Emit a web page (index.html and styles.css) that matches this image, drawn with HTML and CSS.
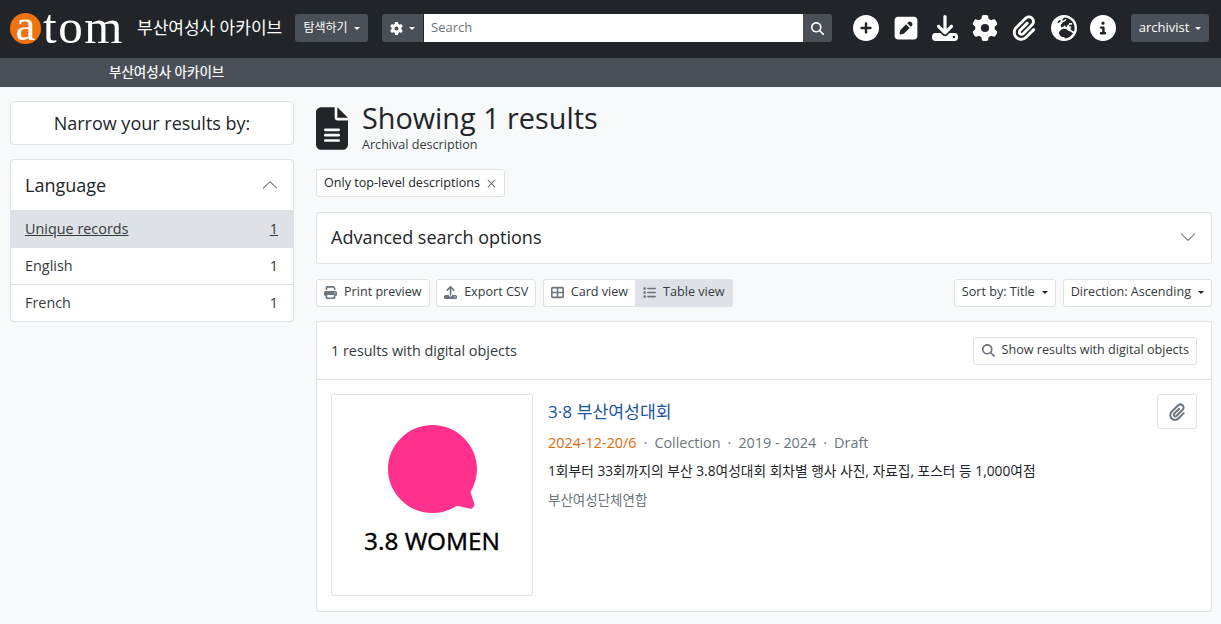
FILE: index.html
```html
<!DOCTYPE html>
<html lang="ko">
<head>
<meta charset="utf-8">
<title>부산여성사 아카이브</title>
<link rel="stylesheet" href="styles.css">
</head>
<body>
<header class="topbar">
  <a class="logo"><span class="logo-a">a</span><span class="logo-tom">tom</span></a>
  <span class="site-title">부산여성사 아카이브</span>
  <button class="dark-btn browse">탐색하기<i class="caret"></i></button>
  <form class="search">
    <button class="dark-btn gear" type="button">
      <svg class="ico-13" viewBox="0 0 512 512"><path d="M495.900 166.600c3.200 8.700 .5 18.400-6.400 24.600l-43.300 39.400c1.100 8.300 1.700 16.800 1.700 25.400s-.6 17.100-1.700 25.400l43.300 39.400c6.900 6.200 9.600 15.900 6.400 24.600c-4.400 11.900-9.700 23.300-15.800 34.300l-4.700 8.100c-6.600 11-14 21.400-22.100 31.200c-5.900 7.200-15.700 9.600-24.500 6.800l-55.700-17.700c-13.400 10.300-28.200 18.900-44 25.400l-12.500 57.100c-2 9.100-9 16.300-18.200 17.800c-13.800 2.300-28 3.500-42.500 3.500s-28.700-1.200-42.500-3.500c-9.200-1.500-16.200-8.700-18.200-17.800l-12.500-57.100c-15.800-6.500-30.600-15.100-44-25.400L83.100 425.900c-8.800 2.800-18.600 .3-24.500-6.800c-8.100-9.800-15.500-20.200-22.100-31.200l-4.700-8.100c-6.100-11-11.400-22.400-15.800-34.300c-3.200-8.700-.5-18.400 6.400-24.600l43.300-39.400C64.600 273.100 64 264.600 64 256s.6-17.100 1.700-25.400L22.400 191.200c-6.900-6.200-9.600-15.900-6.400-24.600c4.400-11.900 9.700-23.300 15.800-34.300l4.700-8.100c6.600-11 14-21.400 22.100-31.200c5.900-7.200 15.700-9.600 24.500-6.800l55.700 17.700c13.400-10.300 28.200-18.900 44-25.400l12.500-57.100c2-9.100 9-16.300 18.200-17.800C227.300 1.200 241.500 0 256 0s28.700 1.200 42.500 3.500c9.200 1.500 16.200 8.700 18.200 17.800l12.500 57.100c15.800 6.500 30.600 15.100 44 25.400l55.700-17.700c8.800-2.800 18.600-.3 24.500 6.800c8.100 9.800 15.500 20.200 22.100 31.200l4.700 8.100c6.100 11 11.400 22.400 15.800 34.300zM256 336a80 80 0 1 0 0-160 80 80 0 1 0 0 160z"/></svg>
      <i class="caret"></i>
    </button>
    <input class="search-input" type="text" placeholder="Search">
    <button class="dark-btn search-go" type="button">
      <svg class="ico-13" viewBox="0 0 512 512"><path d="M416 208c0 45.900-14.900 88.300-40 122.700L502.600 457.400c12.500 12.500 12.500 32.800 0 45.300s-32.800 12.500-45.300 0L330.700 376c-34.400 25.200-76.800 40-122.700 40C93.100 416 0 322.900 0 208S93.100 0 208 0S416 93.100 416 208zM208 352a144 144 0 1 0 0-288 144 144 0 1 0 0 288z"/></svg>
    </button>
  </form>
  <nav class="top-icons">
    <a class="top-icon"><svg viewBox="0 0 512 512"><path d="M256 512A256 256 0 1 0 256 0a256 256 0 1 0 0 512zM232 344V280H168c-13.300 0-24-10.700-24-24s10.700-24 24-24h64V168c0-13.300 10.700-24 24-24s24 10.700 24 24v64h64c13.300 0 24 10.700 24 24s-10.700 24-24 24H280v64c0 13.300-10.700 24-24 24s-24-10.700-24-24z"/></svg></a>
    <a class="top-icon"><svg viewBox="0 0 448 512"><path d="M64 32C28.700 32 0 60.700 0 96V416c0 35.300 28.700 64 64 64H384c35.300 0 64-28.700 64-64V96c0-35.300-28.700-64-64-64H64zM325.800 139.700l14.500 14.500c15.600 15.600 15.600 40.900 0 56.600l-21.400 21.400-71-71 21.400-21.400c15.600-15.600 40.900-15.600 56.600 0zM119.900 289L225.100 183.800l71 71L190.900 359.900c-4.100 4.100-9.200 7-14.900 8.400l-60.100 15c-5.500 1.400-11.200-.2-15.200-4.200s-5.600-9.700-4.200-15.200l15-60.100c1.400-5.600 4.300-10.800 8.400-14.900z"/></svg></a>
    <a class="top-icon"><svg viewBox="0 0 512 512"><path d="M288 32c0-17.700-14.300-32-32-32s-32 14.300-32 32V274.700l-73.400-73.400c-12.500-12.500-32.800-12.500-45.300 0s-12.500 32.800 0 45.300l128 128c12.500 12.500 32.800 12.500 45.300 0l128-128c12.500-12.500 12.500-32.800 0-45.300s-32.800-12.500-45.300 0L288 274.700V32zM64 352c-35.300 0-64 28.700-64 64v32c0 35.300 28.700 64 64 64H448c35.300 0 64-28.700 64-64V416c0-35.300-28.700-64-64-64H346.500l-45.300 45.300c-25 25-65.500 25-90.500 0L165.500 352H64zm368 56a24 24 0 1 1 0 48 24 24 0 1 1 0-48z"/></svg></a>
    <a class="top-icon"><svg viewBox="0 0 512 512"><path d="M495.900 166.600c3.200 8.700 .5 18.400-6.400 24.600l-43.300 39.400c1.100 8.300 1.700 16.800 1.700 25.400s-.6 17.100-1.700 25.400l43.300 39.400c6.900 6.200 9.600 15.900 6.400 24.600c-4.400 11.900-9.700 23.300-15.800 34.300l-4.700 8.100c-6.600 11-14 21.400-22.100 31.200c-5.900 7.200-15.700 9.600-24.500 6.800l-55.700-17.700c-13.400 10.300-28.200 18.900-44 25.400l-12.500 57.100c-2 9.100-9 16.300-18.200 17.800c-13.800 2.300-28 3.500-42.500 3.500s-28.700-1.200-42.500-3.500c-9.200-1.500-16.200-8.700-18.200-17.800l-12.500-57.100c-15.800-6.500-30.600-15.100-44-25.400L83.100 425.900c-8.800 2.800-18.600 .3-24.500-6.800c-8.100-9.800-15.500-20.200-22.100-31.200l-4.700-8.100c-6.100-11-11.400-22.400-15.800-34.300c-3.200-8.700-.5-18.400 6.400-24.600l43.300-39.400C64.600 273.100 64 264.600 64 256s.6-17.100 1.700-25.400L22.400 191.200c-6.900-6.200-9.600-15.900-6.400-24.600c4.400-11.900 9.700-23.300 15.800-34.300l4.700-8.100c6.600-11 14-21.400 22.100-31.200c5.900-7.200 15.700-9.600 24.500-6.800l55.700 17.700c13.400-10.300 28.200-18.900 44-25.400l12.500-57.100c2-9.100 9-16.300 18.200-17.800C227.300 1.200 241.500 0 256 0s28.700 1.200 42.500 3.500c9.200 1.500 16.200 8.700 18.200 17.800l12.500 57.100c15.800 6.500 30.600 15.100 44 25.400l55.700-17.700c8.800-2.800 18.600-.3 24.500 6.800c8.100 9.800 15.500 20.200 22.100 31.200l4.700 8.100c6.100 11 11.400 22.400 15.800 34.300zM256 336a80 80 0 1 0 0-160 80 80 0 1 0 0 160z"/></svg></a>
    <a class="top-icon"><svg viewBox="0 0 448 512"><path d="M364.200 83.800c-24.400-24.400-64-24.400-88.400 0l-184 184c-42.100 42.100-42.100 110.300 0 152.400s110.300 42.100 152.400 0l152-152c10.900-10.900 28.700-10.900 39.600 0s10.900 28.700 0 39.600l-152 152c-64 64-167.600 64-231.600 0s-64-167.600 0-231.600l184-184c46.300-46.300 121.300-46.300 167.600 0s46.300 121.300 0 167.600l-176 176c-28.600 28.600-75 28.600-103.600 0s-28.600-75 0-103.600l144-144c10.900-10.900 28.700-10.900 39.600 0s10.900 28.700 0 39.600l-144 144c-6.700 6.700-6.700 17.700 0 24.400s17.700 6.700 24.400 0l176-176c24.400-24.400 24.400-64 0-88.400z"/></svg></a>
    <a class="top-icon"><svg viewBox="0 0 512 512"><path d="M266.300 48.300L232.500 73.600c-5.400 4-8.500 10.400-8.500 17.100v9.100c0 6.800 5.500 12.300 12.300 12.300c2.400 0 4.800-.7 6.800-2.100l41.800-27.900c2-1.300 4.400-2.100 6.800-2.100h1c6.200 0 11.300 5.100 11.300 11.300c0 3-1.200 5.900-3.300 8l-19.900 19.900c-5.800 5.800-12.900 10.200-20.700 12.800l-26.500 8.800c-5.800 1.900-9.600 7.300-9.600 13.400c0 3.700-1.500 7.300-4.100 10l-17.900 17.900c-6.400 6.400-9.900 15-9.900 24v4.300c0 16.400 13.600 29.700 29.900 29.700c11 0 21.200-6.200 26.100-16.100l4-8.100c2.400-4.800 7.400-7.900 12.800-7.900c4.500 0 8.700 2.100 11.400 5.700l16.300 21.700c2.100 2.900 5.500 4.500 9.100 4.500c8.400 0 13.900-8.900 10.100-16.400l-1.100-2.300c-3.500-7 0-15.500 7.500-18l21.200-7.100c7.600-2.500 12.700-9.600 12.700-17.600c0-10.300 8.300-18.600 18.600-18.600H400c8.800 0 16 7.200 16 16s-7.200 16-16 16H379.300c-7.200 0-14.200 2.900-19.300 8l-4.700 4.700c-2.100 2.100-3.300 5-3.300 8c0 6.200 5.100 11.300 11.300 11.300h11.300c6 0 11.800 2.400 16 6.600l6.500 6.500c1.800 1.800 2.800 4.300 2.800 6.800s-1 5-2.800 6.800l-7.500 7.500C386 262 384 266.900 384 272s2 10 5.700 13.700L408 304c10.200 10.200 24.100 16 38.600 16H454c6.500-20.200 10-41.700 10-64c0-111.400-87.600-202.400-197.700-207.700zm172 307.900c-3.700-2.600-8.200-4.100-13-4.100c-6 0-11.800-2.400-16-6.600L396 332c-7.700-7.700-18-12-28.900-12c-9.700 0-19.200-3.500-26.600-9.800L314 287.400c-11.600-9.900-26.400-15.400-41.700-15.400H251.400c-12.600 0-25 3.700-35.500 10.700L188.500 301c-17.800 11.900-28.500 31.900-28.500 53.300v3.200c0 17 6.700 33.300 18.700 45.300l16 16c8.500 8.500 20 13.300 32 13.300H248c13.300 0 24 10.700 24 24c0 2.500 .4 5 1.100 7.300c71.300-5.800 132.500-47.600 165.200-107.200zM0 256a256 256 0 1 1 512 0A256 256 0 1 1 0 256zM187.300 100.700c-6.200-6.200-16.400-6.200-22.600 0l-32 32c-6.200 6.200-6.200 16.400 0 22.600s16.400 6.200 22.600 0l32-32c6.200-6.200 6.200-16.400 0-22.600z"/></svg></a>
    <a class="top-icon"><svg viewBox="0 0 512 512"><path d="M256 512A256 256 0 1 0 256 0a256 256 0 1 0 0 512zM216 336h24V272H216c-13.300 0-24-10.700-24-24s10.700-24 24-24h48c13.300 0 24 10.700 24 24v88h8c13.300 0 24 10.700 24 24s-10.700 24-24 24H216c-13.300 0-24-10.700-24-24s10.700-24 24-24zm40-208a32 32 0 1 1 0 64 32 32 0 1 1 0-64z"/></svg></a>
  </nav>
  <button class="dark-btn user">archivist<i class="caret"></i></button>
</header>
<div class="subbar"><span class="subbar-text">부산여성사 아카이브</span></div>

<div class="page">
  <aside class="sidebar">
    <div class="narrow">Narrow your results by:</div>
    <section class="facet">
      <div class="facet-head">
        <span>Language</span>
        <svg class="chev" viewBox="0 0 16 16"><path d="M1 11.400 8 4.600l7 6.800" fill="none" stroke="#212529" stroke-width=".9"/></svg>
      </div>
      <a class="facet-row active"><span>Unique records</span><span>1</span></a>
      <a class="facet-row"><span>English</span><span>1</span></a>
      <a class="facet-row"><span>French</span><span>1</span></a>
    </section>
  </aside>

  <main class="content">
    <div class="heading">
      <svg class="heading-icon" viewBox="0 0 384 512"><path d="M64 0C28.700 0 0 28.700 0 64V448c0 35.300 28.700 64 64 64H320c35.300 0 64-28.700 64-64V160H256c-17.700 0-32-14.300-32-32V0H64zM256 0V128H384L256 0zM112 256H272c8.800 0 16 7.200 16 16s-7.200 16-16 16H112c-8.800 0-16-7.200-16-16s7.200-16 16-16zm0 64H272c8.800 0 16 7.200 16 16s-7.200 16-16 16H112c-8.800 0-16-7.200-16-16s7.200-16 16-16zm0 64H272c8.800 0 16 7.200 16 16s-7.200 16-16 16H112c-8.800 0-16-7.200-16-16s7.200-16 16-16z"/></svg>
      <div class="heading-text">
        <h1>Showing 1 results</h1>
        <span class="heading-sub">Archival description</span>
      </div>
    </div>

    <div class="tags">
      <span class="tag">Only top-level descriptions <svg class="tag-x" viewBox="0 0 10 10"><path d="M1 1l8 8m0-8l-8 8" stroke="#6c757d" stroke-width="1.2" fill="none"/></svg></span>
    </div>

    <div class="advanced">
      <span>Advanced search options</span>
      <svg class="chev" viewBox="0 0 16 16"><path d="M1 4.600 8 11.400l7-6.800" fill="none" stroke="#212529" stroke-width=".9"/></svg>
    </div>

    <div class="toolbar">
      <a class="btn"><svg class="ico-13 grey" viewBox="0 0 512 512"><path d="M128 0C92.700 0 64 28.700 64 64v96h64V64H354.700L384 93.300V160h64V93.300c0-17-6.700-33.300-18.700-45.300L400 18.700C388 6.700 371.700 0 354.700 0H128zM384 352v32 64H128V384 368 352H384zm64 32h32c17.700 0 32-14.300 32-32V256c0-35.300-28.700-64-64-64H64c-35.300 0-64 28.700-64 64v96c0 17.700 14.300 32 32 32H64v64c0 35.300 28.700 64 64 64H384c35.300 0 64-28.700 64-64V384zM432 248a24 24 0 1 1 0 48 24 24 0 1 1 0-48z"/></svg>Print preview</a>
      <a class="btn"><svg class="ico-13 grey" viewBox="0 0 512 512"><path d="M288 109.300V352c0 17.700-14.300 32-32 32s-32-14.300-32-32V109.300l-73.400 73.400c-12.500 12.500-32.800 12.500-45.300 0s-12.500-32.800 0-45.300l128-128c12.500-12.500 32.800-12.500 45.300 0l128 128c12.500 12.500 12.500 32.800 0 45.300s-32.800 12.500-45.300 0L288 109.300zM64 352H192c0 35.300 28.700 64 64 64s64-28.700 64-64H448c35.300 0 64 28.700 64 64v32c0 35.300-28.700 64-64 64H64c-35.300 0-64-28.700-64-64V416c0-35.300 28.700-64 64-64zM432 456a24 24 0 1 0 0-48 24 24 0 1 0 0 48z"/></svg>Export CSV</a>
      <div class="btn-group">
        <a class="btn"><svg class="ico-13 grey" viewBox="0 0 512 512"><path d="M448 96V224H288V96H448zm0 192V416H288V288H448zM224 224H64V96H224V224zM64 288H224V416H64V288zM64 32C28.700 32 0 60.700 0 96V416c0 35.300 28.700 64 64 64H448c35.300 0 64-28.700 64-64V96c0-35.300-28.700-64-64-64H64z"/></svg>Card view</a>
        <a class="btn on"><svg class="ico-13 grey" viewBox="0 0 512 512"><path d="M40 48C26.700 48 16 58.700 16 72v48c0 13.300 10.700 24 24 24H88c13.300 0 24-10.700 24-24V72c0-13.300-10.700-24-24-24H40zM192 64c-17.700 0-32 14.300-32 32s14.300 32 32 32H480c17.700 0 32-14.300 32-32s-14.300-32-32-32H192zm0 160c-17.700 0-32 14.300-32 32s14.300 32 32 32H480c17.700 0 32-14.300 32-32s-14.300-32-32-32H192zm0 160c-17.700 0-32 14.300-32 32s14.300 32 32 32H480c17.700 0 32-14.300 32-32s-14.300-32-32-32H192zM16 232v48c0 13.300 10.700 24 24 24H88c13.300 0 24-10.700 24-24V232c0-13.300-10.700-24-24-24H40c-13.300 0-24 10.700-24 24zM40 368c-13.300 0-24 10.700-24 24v48c0 13.300 10.700 24 24 24H88c13.300 0 24-10.700 24-24V392c0-13.300-10.700-24-24-24H40z"/></svg>Table view</a>
      </div>
      <div class="toolbar-right">
        <a class="btn">Sort by: Title<i class="caret dark"></i></a>
        <a class="btn">Direction: Ascending<i class="caret dark"></i></a>
      </div>
    </div>

    <section class="results">
      <div class="results-head">
        <span>1 results with digital objects</span>
        <a class="btn"><svg class="ico-13 grey" viewBox="0 0 512 512"><path d="M416 208c0 45.900-14.900 88.300-40 122.700L502.600 457.400c12.500 12.500 12.500 32.800 0 45.300s-32.800 12.500-45.300 0L330.700 376c-34.400 25.200-76.800 40-122.700 40C93.100 416 0 322.900 0 208S93.100 0 208 0S416 93.100 416 208zM208 352a144 144 0 1 0 0-288 144 144 0 1 0 0 288z"/></svg>Show results with digital objects</a>
      </div>
      <article class="result">
        <a class="thumb">
          <svg class="thumb-mark" viewBox="0 0 90 90"><path fill="#ff318c" d="M44.500 1C69 1 89 21 89 45c0 8-2.200 16-6.500 23L86 79c1.300 3.300-1.500 6.300-4.800 5.500L69 81.800C62.500 86 53.800 89 44.500 89 20 89 0 69 0 45S20 1 44.500 1z"/></svg>
          <span class="thumb-label">3.8 WOMEN</span>
        </a>
        <div class="result-body">
          <a class="result-title">3·8 부산여성대회</a>
          <div class="result-meta"><span class="ref">2024-12-20/6</span><span class="sep">·</span>Collection<span class="sep">·</span>2019 - 2024<span class="sep">·</span>Draft</div>
          <p class="result-desc">1회부터 33회까지의 부산 3.8여성대회 회차별 행사 사진, 자료집, 포스터 등 1,000여점</p>
          <p class="result-creator">부산여성단체연합</p>
        </div>
        <a class="btn clip"><svg class="ico-18 grey" viewBox="0 0 448 512"><path d="M364.200 83.800c-24.400-24.400-64-24.400-88.400 0l-184 184c-42.100 42.100-42.100 110.300 0 152.400s110.300 42.100 152.400 0l152-152c10.900-10.900 28.700-10.900 39.600 0s10.900 28.700 0 39.600l-152 152c-64 64-167.600 64-231.600 0s-64-167.600 0-231.600l184-184c46.300-46.300 121.300-46.300 167.600 0s46.300 121.300 0 167.600l-176 176c-28.600 28.600-75 28.600-103.600 0s-28.600-75 0-103.600l144-144c10.900-10.900 28.700-10.900 39.600 0s10.900 28.700 0 39.600l-144 144c-6.700 6.700-6.700 17.700 0 24.400s17.700 6.700 24.400 0l176-176c24.400-24.400 24.400-64 0-88.400z"/></svg></a>
      </article>
    </section>
  </main>
</div>
</body>
</html>
```
FILE: styles.css
```css
* { box-sizing: border-box; }
html, body { margin: 0; height: 100%; overflow: hidden; }
body {
  background: #f8f9fa;
  color: #212529;
  font-family: "Open Sans", "Noto Sans CJK KR", sans-serif;
  font-size: 12.6px;
  line-height: 1.5;
}
button { font: inherit; cursor: pointer; }
svg { fill: currentColor; flex: none; display: block; }
.ico-13 { width: 13px; height: 13px; }
.ico-18 { width: 18px; height: 18px; }
.grey { color: #6c757d; }

.topbar {
  display: flex;
  align-items: center;
  height: 58px;
  padding: 0 12px 2px 10px;
  background: #212529;
  color: #fff;
}
.logo { display: flex; align-items: center; color: #fff; width: 127px; flex: none; }
.logo-a {
  width: 31px; height: 31px; border-radius: 50%;
  background: #f0730f;
  display: flex; align-items: center; justify-content: center;
  font: 44px/31px "Liberation Serif", serif;
  padding-bottom: 5px;
  flex: none;
}
.logo-tom { font: 49px/40px "Liberation Serif", serif; margin-left: 2px; margin-top: -3px; letter-spacing: 1.6px; }
.site-title { font-size: 17px; white-space: nowrap; width: 158px; flex: none; }

.dark-btn {
  display: flex; align-items: center; justify-content: center;
  height: 28px;
  border: 0; border-radius: 3px;
  background: #495057;
  color: #fff;
  font-size: 13px;
  padding: 0 8px;
}
.caret {
  display: inline-block;
  margin-left: 6px;
  border-top: 3.9px solid currentColor;
  border-left: 3.9px solid transparent;
  border-right: 3.9px solid transparent;
}
.caret.dark { color: #212529; margin-left: 7px; }
.browse { width: 73px; flex: none; font-size: 12px; }

.search { display: flex; margin-left: 14px; flex: none; }
.gear { width: 41px; border-radius: 3px 0 0 3px; margin-right: 1px; }
.search-input {
  width: 379px; height: 28px;
  border: 0; padding: 0 7px 2px; margin: 0;
  background: #fff;
  font: 13px "Open Sans", sans-serif;
  outline: none;
}
.search-input::placeholder { color: #6c757d; }
.search-go { width: 29px; border-radius: 0 3px 3px 0; }

.top-icons { display: flex; align-items: center; margin-left: 14.500px; flex: none; }
.top-icon { width: 39.5px; display: flex; justify-content: center; color: #fff; }
.top-icon svg { width: 26px; height: 26px; }
.user { margin-left: auto; width: 78px; }

.subbar {
  height: 29px;
  background: #495057;
  color: #fff;
  display: flex; align-items: center;
  padding-left: 109px;
  font-size: 13.5px;
}
.subbar-text { -webkit-text-stroke: .2px #fff; }

.page { display: flex; align-items: flex-start; gap: 22px; padding: 14px 9px 0 10px; }
.sidebar { width: 284px; flex: none; display: flex; flex-direction: column; gap: 14px; }
.narrow {
  height: 44px;
  display: flex; align-items: center; justify-content: center;
  background: #fff;
  border: 1px solid #dee2e6;
  border-radius: 4px;
  font-size: 18px;
}
.facet { background: #fff; border: 1px solid #dee2e6; border-radius: 4px; overflow: hidden; }
.facet-head {
  height: 50px;
  display: flex; align-items: center; justify-content: space-between;
  padding: 0 15px 0 14px;
  font-size: 18px;
}
.chev { width: 16px; height: 16px; color: #212529; }
.facet-row {
  height: 37px;
  display: flex; align-items: center; justify-content: space-between;
  padding: 0 15px 0 14px;
  border-top: 1px solid #dee2e6;
  font-size: 14.4px;
  color: #343a40;
}
.facet-row.active { background: #dee2e6; text-decoration: underline; }

.content { flex: 1; min-width: 0; }
.heading { display: flex; align-items: flex-start; gap: 14px; height: 68px; padding-top: 6px; }
.heading-icon { width: 32px; height: 43px; color: #212529; }
.heading-text { display: flex; flex-direction: column; margin-top: -7px; }
h1 { margin: 0; font-size: 28.8px; font-weight: 400; line-height: 36px; }
.heading-sub { font-size: 12.6px; line-height: 17px; color: #343a40; }

.tags { display: flex; }
.tag {
  display: flex; align-items: center; gap: 7px;
  height: 28px;
  padding: 0 8px 0 7px;
  background: #fff;
  border: 1px solid #dee2e6;
  border-radius: 3px;
  white-space: nowrap;
}
.tag-x { width: 9px; height: 9px; }

.advanced {
  margin-top: 15px;
  height: 52px;
  display: flex; align-items: center; justify-content: space-between;
  padding: 0 15px 2px 14px;
  background: #fff;
  border: 1px solid #dee2e6;
  border-radius: 3px;
  font-size: 18px;
}

.toolbar { display: flex; align-items: center; gap: 6.500px; margin-top: 15px; }
.btn {
  height: 28px;
  display: inline-flex; align-items: center; gap: 7px;
  padding: 0 7px 2px;
  background: #fff;
  border: 1px solid #dee2e6;
  border-radius: 3px;
  color: #343a40;
  white-space: nowrap;
}
.btn-group { display: flex; }
.btn-group .btn:first-child { border-radius: 3px 0 0 3px; border-right: 0; }
.btn-group .btn:last-child { border-radius: 0 3px 3px 0; }
.btn.on { background: #dee2e6; }
.toolbar-right { margin-left: auto; display: flex; gap: 7px; }
.toolbar-right .btn { gap: 0; }

.results { margin-top: 14px; background: #fff; border: 1px solid #dee2e6; border-radius: 3px; }
.results-head {
  height: 58px;
  display: flex; align-items: center; justify-content: space-between;
  padding: 0 14px;
  border-bottom: 1px solid #dee2e6;
}
.results-head > span { font-size: 14.4px; color: #343a40; }
.results-head .btn { padding: 0 7px 0 8px; }
.result { display: flex; align-items: flex-start; padding: 14px; height: 231px; }
.thumb {
  width: 202px; height: 202px;
  flex: none;
  display: flex; flex-direction: column; align-items: center;
  padding-top: 29px;
  border: 1px solid #dee2e6;
  border-radius: 3px;
  color: #000;
}
.thumb-mark { width: 90px; height: 90px; margin-left: 1px; }
.thumb-label { font: 24.300px/32px "Noto Sans", sans-serif; margin-top: 11px; -webkit-text-stroke: .3px #000; }
.result-body { flex: 1; min-width: 0; padding-left: 15px; }
.result-title { display: block; font-size: 17.200px; line-height: 24px; color: #1a55a8; margin-top: 6px; }
.result-meta { margin-top: 8px; font-size: 14.4px; line-height: 22px; color: #6c757d; }
.ref { color: #e36a08; }
.sep { margin: 0 7px; }
.result-desc { margin: 7px 0 0; font-size: 13.750px; line-height: 20px; color: #212529; }
.result-creator { margin: 9px 0 0; font-size: 13.5px; line-height: 20px; color: #6c757d; }
.clip { width: 40px; height: 35px; justify-content: center; padding: 0; flex: none; }
```
